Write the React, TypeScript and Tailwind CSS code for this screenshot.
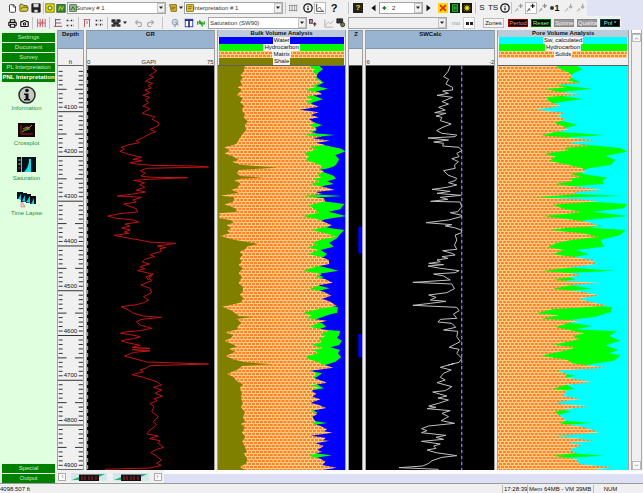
import type { ReactNode } from "react";
import {
    Camera,
    ChevronDown,
    ChevronLeft,
    ChevronRight,
    ChevronUp,
    File,
    FolderOpen,
    Info,
    Printer,
    Redo2,
    Save,
    Undo2,
} from "lucide-react";

// Curves are "x,y" pairs. Every plot shares the y range 18..1230 (3998 ft to 4900 ft).
const TOP = 18;
const PLOT_HEIGHT = 1212;

const GR_CURVE =
    "462,18 456,24 470,32 458,40 448,46 462,52 446,58 436,64 458,70 444,76 454,84 434,90 450,98 428,106 450,112 436,120 446,128 428,138 450,146 436,154 426,160 448,166 464,170 456,178 474,186 478,194 466,202 450,208 467,215 448,222 430,232 408,242 418,248 386,254 362,262 372,268 358,274 385,283 425,292 398,298 426,302 388,308 408,312 458,316 588,318 628,321 440,325 420,332 436,340 422,348 454,352 565,353 448,358 400,361 434,368 418,374 434,382 408,390 436,396 398,402 350,408 424,412 398,420 408,426 370,432 386,438 408,446 412,456 358,461 322,468 342,474 398,480 416,486 374,492 388,498 364,504 390,510 372,516 386,520 340,526 370,532 418,540 448,546 528,550 472,558 498,563 480,566 484,574 450,584 464,590 434,598 426,606 448,612 420,620 434,626 412,632 440,638 458,644 438,650 445,660 " +
    "460,640 445,652 455,662 422,675 450,685 455,698 430,710 445,720 430,728 410,734 362,740 385,750 400,760 430,768 485,772 425,778 408,785 420,795 455,805 420,812 365,817 360,820 385,823 420,830 400,836 362,842 380,848 420,856 395,862 450,865 395,869 450,873 400,877 372,888 410,898 440,906 628,912 450,917 440,923 420,930 430,935 395,944 430,952 470,965 485,975 460,982 485,990 465,1000 488,1008 462,1016 472,1022 450,1030 462,1040 455,1055 475,1070 460,1085 470,1095 450,1110 440,1122 475,1128 448,1136 480,1142 475,1150 492,1162 470,1168 452,1178 465,1185 484,1200 470,1210 484,1216 450,1224 312,1228";

const SW_CURVE =
    "305,18 298,35 285,50 300,58 292,72 312,82 312,90 282,93 300,100 265,106 312,112 280,125 300,132 270,142 290,150 258,158 292,160 262,168 280,172 275,182 308,192 280,203 264,212 280,220 325,225 320,230 238,234 300,240 255,246 285,250 282,258 332,262 340,272 325,280 332,290 310,296 330,305 318,315 320,325 285,332 298,345 325,355 320,362 300,368 325,375 295,382 250,388 305,394 265,400 338,406 275,412 298,418 246,424 335,426 340,440 328,455 305,458 340,466 338,470 300,480 232,488 310,494 290,498 318,503 338,510 340,518 320,525 325,540 318,555 325,568 282,572 310,580 320,585 280,590 298,595 265,600 275,605 240,610 285,614 238,618 275,625 332,632 320,638 255,642 285,648 305,660 192,667 310,672 318,686 295,698 240,705 262,712 245,720 292,724 245,730 192,736 325,742 332,752 315,762 325,775 275,778 268,786 310,790 322,802 285,810 328,814 325,830 335,845 302,862 332,868 325,880 340,895 332,907 300,915 318,910 275,922 308,930 285,940 275,952 290,960 265,968 310,980 290,992 252,996 295,1008 268,1014 300,1020 270,1030 240,1038 262,1042 235,1046 305,1052 280,1060 300,1070 278,1082 318,1090 240,1098 218,1106 235,1112 218,1118 292,1126 262,1132 285,1138 218,1144 275,1152 255,1158 262,1165 235,1170 262,1178 325,1187 280,1192 250,1202 240,1210 222,1218 150,1223 270,1228";

const BULK_SHALE =
    "104,18 100,35 90,45 98,52 90,62 96,75 82,82 95,90 80,105 98,115 90,128 102,138 94,150 104,162 100,172 114,185 104,195 108,210 95,225 85,240 78,252 42,262 58,272 42,280 70,290 85,300 65,305 90,314 205,323 85,330 80,340 90,348 165,353 90,356 72,362 90,370 80,385 62,390 85,398 30,407 72,412 68,425 42,433 75,445 80,455 26,460 26,475 60,480 70,488 48,495 62,503 50,512 60,520 28,528 75,540 145,552 110,560 105,568 88,575 98,585 88,595 95,605 85,615 98,625 85,640 95,651 85,670 98,680 98,695 88,705 100,715 90,728 35,740 60,750 75,760 85,768 130,771 78,777 95,788 80,800 85,808 42,817 70,825 60,835 42,842 65,852 80,860 55,867 75,875 45,888 68,898 105,907 190,913 95,918 85,927 50,942 70,952 78,962 98,973 88,985 95,1000 92,1015 98,1030 92,1042 104,1055 98,1075 106,1085 92,1092 104,1102 95,1118 106,1130 96,1145 104,1160 110,1175 100,1182 112,1195 108,1210 88,1222 108,1230";

const BULK_MATRIX =
    "300,18 318,28 310,35 325,45 320,55 340,68 310,76 320,82 288,90 330,97 340,103 290,110 310,118 290,125 330,140 272,149 330,157 305,165 330,172 300,178 318,188 302,195 325,207 300,215 325,220 284,225 340,230 310,235 365,242 320,248 350,255 300,262 325,268 286,280 300,288 290,300 320,310 345,320 330,325 345,335 325,345 340,352 310,358 335,365 302,372 350,382 378,390 320,396 340,402 280,408 345,415 350,424 300,436 320,450 330,458 280,468 325,477 345,485 370,496 330,505 308,510 350,520 385,530 340,538 310,548 325,555 296,562 330,570 298,582 340,592 360,600 362,612 320,620 282,632 340,642 320,650 350,658 372,668 335,675 302,686 345,695 368,707 340,716 365,725 385,738 340,745 282,758 310,768 290,774 355,782 330,788 302,800 340,808 362,814 332,822 350,828 330,838 342,845 308,855 345,864 310,870 330,878 290,890 300,898 325,905 340,913 375,923 305,932 325,942 310,952 355,968 300,977 330,982 308,992 322,1002 310,1010 335,1018 305,1028 330,1035 352,1044 305,1053 325,1062 310,1070 320,1085 310,1090 335,1098 355,1108 345,1114 372,1118 305,1127 350,1133 345,1140 330,1140 362,1142 320,1150 345,1158 325,1170 340,1175 298,1187 335,1196 350,1205 340,1215 385,1223 340,1230";

const BULK_HYDROCARBON =
    "332,18 342,28 328,38 322,50 345,68 322,78 358,86 325,94 305,103 342,118 312,127 300,135 290,140 270,149 280,157 290,170 300,183 340,195 318,203 322,212 300,218 378,225 300,233 300,240 320,250 370,260 398,266 410,274 380,286 392,298 385,310 378,318 360,325 330,330 345,337 375,347 382,356 355,364 375,372 330,380 300,392 300,402 400,408 300,414 345,424 408,432 395,448 360,455 412,468 350,478 330,486 365,496 355,503 408,510 395,522 385,535 362,548 375,560 335,570 355,582 345,590 320,598 320,615 390,632 325,642 345,652 310,660 310,672 362,685 320,695 300,710 300,730 388,742 386,758 360,764 330,775 310,782 340,790 352,800 330,808 395,813 392,825 385,833 400,842 392,855 365,862 395,870 388,880 398,892 380,905 350,915 330,923 300,932 340,940 325,950 300,960 345,985 300,992 300,1045 325,1057 310,1070 310,1082 355,1089 310,1095 300,1120 300,1178 370,1186 330,1192 300,1205 300,1230";

const PORE_SOLIDS =
    "190,18 205,28 230,38 240,50 225,62 265,68 190,75 220,82 155,88 205,96 265,103 160,112 170,125 205,138 130,149 215,158 195,168 220,178 185,188 215,200 225,210 185,217 145,226 230,233 310,241 225,248 295,258 215,263 230,270 155,282 190,290 170,302 215,312 270,325 280,335 232,342 270,350 235,355 240,363 185,373 270,382 330,390 240,397 260,402 130,412 260,418 320,424 180,434 215,447 270,457 150,468 230,478 290,487 320,498 220,504 170,510 270,520 320,530 235,540 190,550 165,562 215,570 180,583 240,590 300,600 310,612 240,622 150,633 240,640 265,646 180,660 240,664 320,668 235,676 180,686 260,694 320,706 260,716 300,727 345,737 180,748 130,760 200,766 145,776 265,782 225,790 190,802 230,810 275,820 240,828 260,836 235,844 180,854 250,862 225,870 145,887 225,900 240,910 340,923 190,932 225,942 215,952 300,966 220,975 180,986 225,992 210,1008 265,1017 190,1027 215,1033 290,1038 250,1043 185,1055 205,1068 220,1082 200,1090 270,1100 300,1110 320,1118 185,1128 250,1135 305,1142 225,1150 270,1155 230,1170 255,1178 180,1187 255,1198 260,1212 360,1222 300,1230";

const PORE_HYDROCARBON =
    "255,18 270,28 245,38 230,50 265,68 200,76 300,86 210,95 170,103 270,117 190,128 150,140 130,150 150,160 190,178 255,195 215,205 190,215 335,225 230,232 230,240 230,250 385,264 405,275 340,288 370,300 355,315 290,325 260,335 275,343 345,353 330,362 335,371 230,380 230,392 200,400 390,408 150,414 250,422 405,432 395,445 300,455 410,468 280,480 260,487 330,497 290,503 400,510 385,525 325,540 335,560 250,570 290,583 240,592 200,600 200,620 365,632 210,640 210,646 250,658 200,665 210,672 300,686 200,695 200,728 360,742 355,756 310,770 250,778 200,784 300,798 250,808 375,814 350,828 385,842 340,856 378,870 350,880 385,886 365,902 280,915 200,926 200,936 250,948 190,958 245,986 190,996 180,1042 235,1055 190,1066 190,1080 300,1089 190,1096 180,1175 335,1187 200,1195 190,1230";

const ZONES = [
    { from: 500, to: 580 },
    { from: 822, to: 892 },
];

const DEPTHS = Array.from({ length: 90 }, (_, i) => 4010 + i * 10);
const depthToY = (depth: number) => 155 + (depth - 4100) * 1.343;

const SECTIONS = ["Settings", "Document", "Survey", "PL Interpretation"];

function BrickPattern({ id, scale }: { id: string; scale: number }) {
    return (
        <pattern id={id} width="4" height="6" patternUnits="userSpaceOnUse" patternTransform={`scale(${scale})`}>
            <rect width="4" height="6" fill="#ff7f2a" />
            <path d="M0 0h4v1H0zM0 3h4v1H0z" fill="#ffce80" />
            <path d="M1 1h1v2H1zM3 4h1v2H3z" fill="#ffd68c" />
        </pattern>
    );
}

function Plot({ left, width, className, children }: { left: number; width: number; className: string; children?: ReactNode }) {
    return (
        <svg
            viewBox={`${left} ${TOP} ${width} ${PLOT_HEIGHT}`}
            preserveAspectRatio="none"
            className={`block h-full w-full ${className}`}
        >
            {children}
        </svg>
    );
}

function Area({ left, curve, fill }: { left: number; curve: string; fill: string }) {
    return <polygon points={`${left},18 ${curve} ${left},1230`} fill={fill} />;
}

function Track({ header, children }: { header: ReactNode; children: ReactNode }) {
    return (
        <section className="flex min-h-0 min-w-0 flex-col border-x border-[#a0a0a0]">
            <div className="flex h-9 shrink-0 flex-col border-b border-[#606060] bg-[#f0f0f0]">{header}</div>
            <div className="min-h-0 flex-1">{children}</div>
        </section>
    );
}

function ScaleHeader({ title, min, unit, max }: { title: string; min?: string; unit?: string; max?: string }) {
    return (
        <>
            <h2 className="h-[19px] border-y border-[#8096ac] bg-[#99b4d1] text-center font-bold leading-[7px]">{title}</h2>
            <div className="flex flex-1 items-end justify-between leading-[6px] text-[#333]">
                <span>{min}</span>
                <span>{unit}</span>
                <span>{max}</span>
            </div>
        </>
    );
}

function LegendRow({ label, className, bricks }: { label: string; className?: string; bricks?: string }) {
    return (
        <div className={`relative flex h-[7px] justify-center ${className ?? ""}`}>
            {bricks && (
                <svg className="absolute inset-0 h-full w-full">
                    <defs>
                        <BrickPattern id={bricks} scale={1} />
                    </defs>
                    <rect width="100%" height="100%" fill={`url(#${bricks})`} />
                </svg>
            )}
            <span className="relative bg-[#f4f4f4] px-px leading-[7px]">{label}</span>
        </div>
    );
}

function LegendHeader({ title, children }: { title: string; children: ReactNode }) {
    return (
        <>
            <h2 className="h-[7px] bg-[#bccbda] text-center font-bold leading-[7px]">{title}</h2>
            <div className="px-px">{children}</div>
        </>
    );
}

function DepthRuler() {
    return (
        <div className="relative h-full bg-[#f0f0f0]">
            <Plot left={174} width={76} className="">
                {DEPTHS.map((depth) => {
                    const y = depthToY(depth);
                    const d =
                        depth % 100 === 0
                            ? `M174 ${y}H250`
                            : depth % 50 === 0
                              ? `M174 ${y}H200M226 ${y}H250`
                              : `M176 ${y}H188M237 ${y}H250`;
                    return <path key={depth} d={d} stroke="#333" vectorEffect="non-scaling-stroke" />;
                })}
            </Plot>
            {DEPTHS.filter((depth) => depth % 100 === 0).map((depth) => (
                <span
                    key={depth}
                    className="absolute inset-x-0 -translate-y-full text-center leading-[9px]"
                    style={{ top: `${((depthToY(depth) - TOP) / PLOT_HEIGHT) * 100}%` }}
                >
                    {depth}
                </span>
            ))}
        </div>
    );
}

function Tool({ label, children, pressed, className }: { label: string; children: ReactNode; pressed?: boolean; className?: string }) {
    return (
        <button
            type="button"
            aria-label={label}
            className={`flex shrink-0 items-center justify-center ${pressed ? "border border-[#bbb] bg-white" : ""} ${className ?? "h-3 w-3"}`}
        >
            {children}
        </button>
    );
}

function Glyph({ children, className }: { children: ReactNode; className?: string }) {
    return (
        <svg viewBox="0 0 12 12" className={`shrink-0 ${className ?? "h-2.5 w-2.5"}`} fill="none" stroke="#222">
            {children}
        </svg>
    );
}

function Divider() {
    return <span className="mx-0.5 h-3 w-px shrink-0 bg-[#c4c4c4]" />;
}

function Caret() {
    return (
        <svg viewBox="0 0 6 4" className="h-1 w-1.5 shrink-0">
            <path d="M1 0.5h4L3 3z" fill="#222" />
        </svg>
    );
}

function DropDown({ label, value, className, selectClass, icon, disabled }: { label: string; value: string; className: string; selectClass?: string; icon?: ReactNode; disabled?: boolean }) {
    return (
        <div className={`relative flex h-3 shrink-0 items-center border border-[#a5a5a5] ${disabled ? "bg-[#f0f0f0]" : "bg-white"} ${className}`}>
            {icon && <span className="absolute left-px">{icon}</span>}
            <select aria-label={label} disabled={disabled} className={`h-full w-full appearance-none text-[#333] ${selectClass ?? "pl-0.5"}`}>
                <option>{value}</option>
            </select>
            <span className="pointer-events-none absolute right-0 flex h-2.5 w-2 items-center justify-center border border-[#c5c5c5] bg-[#f0f0f0]">
                <Caret />
            </span>
        </div>
    );
}

function CurveTool({ label, color, down, pressed }: { label: string; color: string; down?: boolean; pressed?: boolean }) {
    return (
        <Tool label={label} pressed={pressed}>
            <Glyph>
                <path d="M1 10c2 0 2-3 4-4" stroke={color} />
                <path d="M3 7l2 2" stroke={color} />
                <path d={down ? "M8 1v5M6 4l2 2 2-2" : "M8 1v5M5.500 3.500h5"} stroke={color} strokeWidth="1.500" />
            </Glyph>
        </Tool>
    );
}

function Badge({ label, className }: { label: string; className: string }) {
    return (
        <button type="button" className={`h-2 w-5 shrink-0 border leading-[6px] ${className}`}>
            {label}
        </button>
    );
}

function MainToolbar() {
    return (
        <div className="flex h-4 items-center bg-[#f0f0f0]">
            <Tool label="New" className="ml-1.5 h-3 w-3">
                <File size={9} fill="#fff" strokeWidth={2} />
            </Tool>
            <Tool label="Open">
                <FolderOpen size={10} fill="#d8c840" stroke="#4d4a10" />
            </Tool>
            <Tool label="Save">
                <Glyph>
                    <path d="M1 1h10v10H1z" fill="#222" />
                    <path d="M3 1h6v4H3zM4 8h4v3H4z" fill="#ddd" stroke="none" />
                </Glyph>
            </Tool>
            <span className="mx-px h-3 w-px bg-[#c4c4c4]" />
            <Tool label="Survey properties" className="h-3 w-2.5">
                <Glyph>
                    <rect x="1" y="1" width="10" height="10" fill="#e6e600" stroke="#6b6b00" />
                    <circle cx="6" cy="6" r="2.500" stroke="#444" fill="#dfe7a0" />
                </Glyph>
            </Tool>
            <Tool label="Survey list" className="ml-px mr-px h-3 w-2.5">
                <Glyph>
                    <rect x="1" y="2" width="10" height="9" fill="#3b8a3b" stroke="#1f4a1f" />
                    <path d="M3 9l2-5 2 4 2-4" stroke="#e6e600" />
                </Glyph>
            </Tool>
            <DropDown
                label="Survey"
                value="Survey # 1"
                className="w-[99px]"
                selectClass="pl-2"
                icon={
                    <Glyph className="h-2 w-2">
                        <rect x="1" y="1" width="10" height="10" fill="#8fb98f" stroke="#264f26" />
                        <path d="M3 9l3-5 3 5" stroke="#123f12" />
                    </Glyph>
                }
            />
            <span className="w-0.5" />
            <Tool label="Interpretation properties" className="h-3 w-2.5">
                <Glyph>
                    <path d="M2 2h8v8H4z" fill="#e3bd3a" stroke="#705500" />
                    <path d="M4 5h5M4 7h4" stroke="#705500" />
                </Glyph>
            </Tool>
            <Caret />
            <DropDown
                label="Interpretation"
                value="Interpretation # 1"
                className="w-[99px]"
                selectClass="pl-2"
                icon={
                    <Glyph className="h-2 w-2">
                        <rect x="1" y="1" width="10" height="10" fill="#e3c33a" stroke="#5c5000" />
                        <path d="M3 4h6M3 7h5" stroke="#5c5000" />
                    </Glyph>
                }
            />
            <Divider />
            <Tool label="Grid" className="h-3 w-2.5">
                <Glyph>
                    <path d="M1 3h10M1 9h10M2 2v8M5 2v8M8 2v8M10.500 2v8" stroke="#8c8c8c" />
                </Glyph>
            </Tool>
            <span className="w-1" />
            <Tool label="Information">
                <Info size={10} strokeWidth={3} />
            </Tool>
            <Tool label="Chart" pressed>
                <Glyph>
                    <path d="M2 1v9h9" />
                    <path d="M3 7l3-2 2 4 2 1" stroke="#666" />
                </Glyph>
            </Tool>
            <span className="w-0.5" />
            <Tool label="Help" className="h-3 w-3 text-[11px] font-bold">?</Tool>
            <span className="w-1.5" />
            <Divider />
            <span className="w-0.5" />
            <Tool label="Context help" className="h-2.5 w-2.5 bg-[#222] text-[8px] font-bold text-[#ffe600]">
                ?
            </Tool>
            <span className="w-1" />
            <Tool label="Previous pass">
                <Glyph>
                    <path d="M9 2v8L4 6z" fill="#111" stroke="none" />
                </Glyph>
            </Tool>
            <DropDown
                label="Pass"
                value="2"
                className="w-[44px]"
                selectClass="pl-3"
                icon={
                    <Glyph className="h-2 w-2">
                        <path d="M5 3v6M2 6h6" stroke="#228022" strokeWidth="2" />
                    </Glyph>
                }
            />
            <Tool label="Next pass">
                <Glyph>
                    <path d="M3 2v8l5-4z" fill="#111" stroke="none" />
                </Glyph>
            </Tool>
            <span className="w-0.5" />
            <Tool label="Delete">
                <Glyph>
                    <rect width="12" height="12" fill="#ffd800" stroke="none" />
                    <path d="M2.500 2.500l7 7M9.500 2.500l-7 7" stroke="#e02800" strokeWidth="2" />
                </Glyph>
            </Tool>
            <Tool label="Report">
                <Glyph>
                    <rect width="12" height="12" fill="#102010" stroke="none" />
                    <rect x="3" y="2" width="6" height="8" fill="#186018" stroke="#30c030" />
                    <path d="M4 5h4M4 7h4" stroke="#30c030" />
                </Glyph>
            </Tool>
            <Tool label="Highlight">
                <Glyph>
                    <rect width="12" height="12" fill="#181800" stroke="none" />
                    <path d="M6 2v8M2 6h8M3 3l6 6M9 3L3 9" stroke="#e6d800" />
                    <circle cx="6" cy="6" r="2" fill="#ffe600" stroke="none" />
                </Glyph>
            </Tool>
            <Divider />
            <button type="button" className="w-2 text-[8px]">S</button>
            <button type="button" className="ml-px w-3 text-[8px]">TS</button>
            <Tool label="Details">
                <Info size={10} strokeWidth={3} />
            </Tool>
            <span className="h-3 w-0.5 border-l border-[#c4c4c4]" />
            <CurveTool label="Edit curve" color="#999" />
            <CurveTool label="Add point" color="#222" pressed />
            <CurveTool label="Move curve" color="#888" />
            <button type="button" className="flex w-3 items-center justify-center text-[9px] font-bold">
                <span className="h-1 w-1 rounded-full bg-[#333]" />1
            </button>
            <span className="w-0.5" />
            <CurveTool label="Shift down" color="#aaa" down />
            <CurveTool label="Shift all" color="#aaa" down />
        </div>
    );
}

function CurveToolbar() {
    return (
        <div className="flex h-3.5 items-center">
            <Tool label="Print" className="ml-1.5 h-3 w-3">
                <Printer size={9} strokeWidth={3} />
            </Tool>
            <Tool label="Snapshot">
                <Camera size={9} strokeWidth={3} />
            </Tool>
            <Divider />
            <Tool label="Columns">
                <Glyph>
                    <path d="M2 1v10M5 1v10M8 1v10M11 1v10M2 6h3M8 6h3" stroke="#b04858" />
                    <path d="M5 9l3-6" stroke="#c03030" />
                </Glyph>
            </Tool>
            <Divider />
            <Tool label="Align rows">
                <Glyph>
                    <path d="M3 1v9M1 10h10M3 6h7" stroke="#8a3a4a" />
                    <path d="M3 2h6" stroke="#3a3a6a" />
                </Glyph>
            </Tool>
            <Tool label="Split rows">
                <Glyph>
                    <path d="M2 3h3M7 3h3M2 9h3M7 9h3" strokeDasharray="1.500 1" strokeWidth="2" />
                </Glyph>
            </Tool>
            <Divider />
            <Tool label="Align columns">
                <Glyph>
                    <path d="M2 2h8M3 2v9M9 2v9M6 4v3" stroke="#b04050" />
                </Glyph>
            </Tool>
            <Tool label="Split columns">
                <Glyph>
                    <path d="M2 3h3M7 3h3M2 8h3M7 8h3" strokeDasharray="1.500 1" strokeWidth="2" />
                </Glyph>
            </Tool>
            <Divider />
            <Tool label="Layout">
                <Glyph>
                    <path d="M1 2h4v3H1zM7 2h4v3H7zM3 5h6v3H3zM1 8h4v2H1zM7 8h4v2H7z" fill="#222" stroke="#444" />
                </Glyph>
            </Tool>
            <Caret />
            <span className="w-1" />
            <Tool label="Undo">
                <Undo2 size={9} stroke="#aaa" strokeWidth={3} />
            </Tool>
            <Tool label="Redo">
                <Redo2 size={9} stroke="#aaa" strokeWidth={3} />
            </Tool>
            <span className="w-1" />
            <Divider />
            <span className="w-1" />
            <Tool label="Probe">
                <Glyph>
                    <circle cx="6" cy="5" r="3.500" stroke="#8a9ab0" fill="#c8d8e8" />
                    <path d="M6 8v3M7 5l3 4" stroke="#607890" />
                </Glyph>
            </Tool>
            <span className="w-0.5" />
            <Tool label="Columns table">
                <Glyph>
                    <rect x="1.500" y="1.500" width="9" height="9" fill="#fff" stroke="#20309a" />
                    <path d="M1 2.500h10M6 2v9" stroke="#20309a" strokeWidth="2" />
                </Glyph>
            </Tool>
            <Tool label="Refresh">
                <Glyph>
                    <path d="M2 8V5h4M4 3L6 5 4 7M10 4v3H6M8 5L6 7l2 3" stroke="#28a028" strokeWidth="1.500" />
                </Glyph>
            </Tool>
            <DropDown label="Curve" value="Saturation (SW90)" className="ml-px w-[99px]" selectClass="pl-px" />
            <Tool label="Calculate">
                <Glyph>
                    <path d="M2 2h3v4H2zM6 7h4M8 5v5" stroke="#60304a" strokeWidth="1.500" />
                </Glyph>
            </Tool>
            <span className="w-1" />
            <Tool label="Trend">
                <Glyph>
                    <path d="M1 2v9h10M2 9l3-4 3 2 3-4" stroke="#aaa" />
                </Glyph>
            </Tool>
            <Tool label="Pick">
                <Glyph>
                    <path d="M1 1h7v5H1z" fill="#333" />
                    <circle cx="8" cy="8" r="2.500" fill="#6a8a4a" />
                </Glyph>
            </Tool>
            <DropDown label="Zone curve" value="" className="ml-px w-[99px]" disabled />
            <span className="w-1" />
            <button type="button" className="w-2.5 text-[#999]">mo</button>
            <span className="w-0.5" />
            <button type="button" aria-label="Link" className="flex h-3 w-3 items-center justify-center gap-px border border-[#ccc] bg-white">
                <span className="h-[3px] w-[3px] bg-[#222]" />
                <span className="h-[3px] w-[3px] bg-[#222]" />
            </button>
            <span className="w-2" />
            <button type="button" className="h-2.5 w-[21px] shrink-0 border border-[#bbb] bg-[#f6f6f6] leading-[7px]">Zones</button>
            <span className="w-1" />
            <div className="flex gap-[3px]">
                <Badge label="Period" className="border-[#900] bg-black text-[#f88]" />
                <Badge label="Reser" className="border-[#070] bg-black text-[#8f8]" />
                <Badge label="Spinne" className="border-[#888] bg-[#999] text-[#eee]" />
                <Badge label="Qualita" className="border-[#888] bg-[#999] text-[#eee]" />
                <Badge label="Pnl *" className="border-[#044] bg-black text-[#7ff]" />
            </div>
        </div>
    );
}

function SectionButton({ label, active }: { label: string; active?: boolean }) {
    return (
        <button
            type="button"
            className={`h-[9px] w-full overflow-hidden whitespace-nowrap bg-[#008000] leading-[9px] ${active ? "font-bold text-white" : "text-[#c8ecc8]"}`}
        >
            {label}
        </button>
    );
}

function SideItem({ label, children }: { label: string; children: ReactNode }) {
    return (
        <a href="#" className="flex h-[35px] flex-col items-center pr-1 text-[#2c8a4c]">
            <span className="flex h-[19px] items-center">{children}</span>
            <span className="leading-[8px]">{label}</span>
        </a>
    );
}

function Sidebar() {
    return (
        <nav className="flex w-14 shrink-0 flex-col bg-[#dfffdf] pl-0.5 pr-px pt-[3px]">
            <div className="flex flex-col gap-px">
                {SECTIONS.map((label) => (
                    <SectionButton key={label} label={label} />
                ))}
                <SectionButton label="PNL Interpretation" active />
            </div>
            <div className="flex-1 pt-[3px]">
                <SideItem label="Information">
                    <svg viewBox="0 0 18 18" className="h-[18px] w-[18px]">
                        <circle cx="9" cy="9" r="8" fill="#c4ccc4" stroke="#2a2a2a" strokeWidth="1.500" />
                        <circle cx="9" cy="4.500" r="1.800" fill="#111" />
                        <path d="M6 7.500h4.500V13H12v1.500H6V13h1.500V9H6z" fill="#111" />
                    </svg>
                </SideItem>
                <SideItem label="Crossplot">
                    <svg viewBox="0 0 17 14" className="h-3.5 w-[17px]">
                        <rect width="17" height="14" fill="#100808" />
                        <path d="M3 2v9h12" stroke="#a02020" fill="none" />
                        <path d="M4 9l4-3 3-1 3-3M5 6l4-2 3 1" stroke="#c08030" fill="none" />
                        <path d="M5 8l3-1 4-1" stroke="#30a030" fill="none" />
                    </svg>
                </SideItem>
                <SideItem label="Saturation">
                    <svg viewBox="0 0 19 15" className="h-[15px] w-[19px]">
                        <rect width="19" height="15" fill="#061018" />
                        <path d="M4.500 0v15" stroke="#aaa" />
                        <path d="M7 15c3-3 5-7 5-13h2v13z" fill="#18e0f0" />
                        <path d="M1.500 3h2M1.500 7h2" stroke="#ddd" />
                        <path d="M1.500 11h2" stroke="#d02020" />
                    </svg>
                </SideItem>
                <SideItem label="Time Lapse">
                    <svg viewBox="0 0 19 16" className="h-4 w-[19px]">
                        <path d="M0 0h6v7H0zM4 1h6v9H4zM9 2h5v9H9zM13 4h6v8h-6z" fill="#061018" />
                        <path d="M1 7l3-5v6zM5 9l3-6v7zM9 10l4-6v7zM14 12l3-6v6z" fill="#18c8e0" />
                        <path d="M4 10v5h4l-2-4z" fill="#e8d0d0" stroke="#c06060" strokeWidth="0.500" />
                    </svg>
                </SideItem>
            </div>
            <div className="flex flex-col gap-px">
                <SectionButton label="Special" />
                <SectionButton label="Output" />
            </div>
        </nav>
    );
}

function Tracks() {
    return (
        <div className="grid min-h-0 min-w-0 flex-1 grid-cols-[27fr_129fr_130fr_15fr_130fr_132fr] gap-x-0.5 pl-px">
            <Track header={<ScaleHeader title="Depth" unit="ft" min=" " max=" " />}>
                <DepthRuler />
            </Track>
            <Track header={<ScaleHeader title="GR" min="0" unit="GAPI" max="75" />}>
                <Plot left={258} width={386} className="bg-black">
                    <path d="M260 18V1230" stroke="#b0b0e0" strokeDasharray="4 3" vectorEffect="non-scaling-stroke" />
                    <polyline points={GR_CURVE} fill="none" stroke="#c01414" vectorEffect="non-scaling-stroke" />
                </Plot>
            </Track>
            <Track
                header={
                    <LegendHeader title="Bulk Volume Analysis">
                        <LegendRow label="Water" className="bg-[#0000ff]" />
                        <LegendRow label="Hydrocarbon" className="bg-[#00ff00]" />
                        <LegendRow label="Matrix" bricks="legend-matrix" />
                        <LegendRow label="Shale" className="bg-[#808000]" />
                    </LegendHeader>
                }
            >
                <Plot left={22} width={390} className="bg-[#0000ff]">
                    <defs>
                        <BrickPattern id="matrix" scale={3} />
                    </defs>
                    <Area left={22} curve={BULK_HYDROCARBON} fill="#00ff00" />
                    <Area left={22} curve={BULK_MATRIX} fill="url(#matrix)" />
                    <Area left={22} curve={BULK_SHALE} fill="#808000" />
                </Plot>
            </Track>
            <Track header={<ScaleHeader title="Z" />}>
                <Plot left={0} width={39} className="bg-black">
                    {ZONES.map((zone) => (
                        <rect key={zone.from} x="28" y={zone.from} width="11" height={zone.to - zone.from} fill="#0000ff" />
                    ))}
                </Plot>
            </Track>
            <Track header={<ScaleHeader title="SWCalc" min="6" max="-2" />}>
                <Plot left={50} width={387} className="bg-black">
                    <path d="M340 18V1230" stroke="#2020a0" vectorEffect="non-scaling-stroke" />
                    <path d="M340 18V1230" stroke="#a0a0c0" strokeDasharray="3 3" vectorEffect="non-scaling-stroke" />
                    <polyline points={SW_CURVE} fill="none" stroke="#c0c0c0" vectorEffect="non-scaling-stroke" />
                </Plot>
            </Track>
            <Track
                header={
                    <LegendHeader title="Pore Volume Analysis">
                        <LegendRow label="Sw, calculated" className="bg-[#00ffff]" />
                        <LegendRow label="Hydrocarbon" className="bg-[#00ff00]" />
                        <LegendRow label="Solids" bricks="legend-solids" />
                    </LegendHeader>
                }
            >
                <Plot left={15} width={392} className="bg-[#00ffff]">
                    <defs>
                        <BrickPattern id="solids" scale={3} />
                    </defs>
                    <Area left={15} curve={PORE_HYDROCARBON} fill="#00ff00" />
                    <Area left={15} curve={PORE_SOLIDS} fill="url(#solids)" />
                </Plot>
            </Track>
        </div>
    );
}

function ScrollColumn() {
    return (
        <div className="flex w-[11px] shrink-0 flex-col border-x border-[#aaa] bg-[#f0f0f0]">
            <span className="h-1 border-b border-[#aaa] bg-white" />
            <button type="button" aria-label="Scroll up" className="flex h-2 items-center justify-center border border-[#bbb] bg-[#fafafa]">
                <ChevronUp size={5} />
            </button>
            <span className="flex-1" />
            <button type="button" aria-label="Scroll down" className="flex h-[9px] items-center justify-center border border-[#bbb] bg-[#fafafa]">
                <ChevronDown size={5} />
            </button>
        </div>
    );
}

function SheetTab({ label }: { label: string }) {
    return (
        <button type="button" aria-label={label} className="h-2 w-9 bg-[#cfe9ea]">
            <svg viewBox="0 0 36 8" className="block h-full w-full">
                <path d="M1 7l7-3v3zM28 1h6l-6 3z" fill="#30b080" />
                <path d="M8 2h20v6H8z" fill="#141010" />
                <path d="M11 3v4M14 3v4M18 3v4M21 3v4M25 3v4" stroke="#b02030" />
                <path d="M8 1.500h20" stroke="#888" />
            </svg>
        </button>
    );
}

function SheetBar() {
    return (
        <div className="flex h-[13px] shrink-0">
            <div className="flex w-[108px] shrink-0 items-center justify-between bg-[#f0f0f0] px-0.5">
                <button type="button" aria-label="Previous sheet" className="flex h-2 w-2 items-center justify-center border border-[#aaa] bg-white">
                    <ChevronLeft size={5} />
                </button>
                <SheetTab label="Sheet 1" />
                <SheetTab label="Sheet 2" />
                <button type="button" aria-label="Next sheet" className="flex h-2 w-2 items-center justify-center border border-[#aaa] bg-white">
                    <ChevronRight size={5} />
                </button>
            </div>
            <div className="flex-1 border-t-4 border-[#fbfbfb] bg-[#dce0f2]" />
        </div>
    );
}

export default function App() {
    return (
        <div className="flex h-screen flex-col overflow-hidden bg-[#f0f0f0] font-['Liberation_Sans',sans-serif] text-[6px] leading-[8px] text-[#111]">
            <header className="flex flex-col items-start bg-[#dfe3f3]">
                <div className="pr-px">
                    <MainToolbar />
                </div>
                <div className="bg-[#f0f0f0] pr-px">
                    <CurveToolbar />
                </div>
            </header>

            <div className="flex min-h-0 flex-1">
                <Sidebar />
                <main className="flex min-w-0 flex-1 flex-col">
                    <div className="flex min-h-0 flex-1 gap-0.5 pr-px">
                        <Tracks />
                        <ScrollColumn />
                    </div>
                    <SheetBar />
                </main>
            </div>

            <footer className="flex h-2.5 shrink-0 items-center border-t border-[#999] bg-[#f0f0f0]">
                <span className="flex-1">4098.507 ft</span>
                <span className="w-[25px] border-l border-[#bbb] pl-px">17:28:39</span>
                <span className="w-[66px] border-l border-[#bbb] pl-px">Mem 64MB - VM 39MB</span>
                <span className="w-[34px] border-l border-[#bbb] text-center">NUM</span>
                <span className="w-4 border-l border-[#bbb]" />
            </footer>
        </div>
    );
}
